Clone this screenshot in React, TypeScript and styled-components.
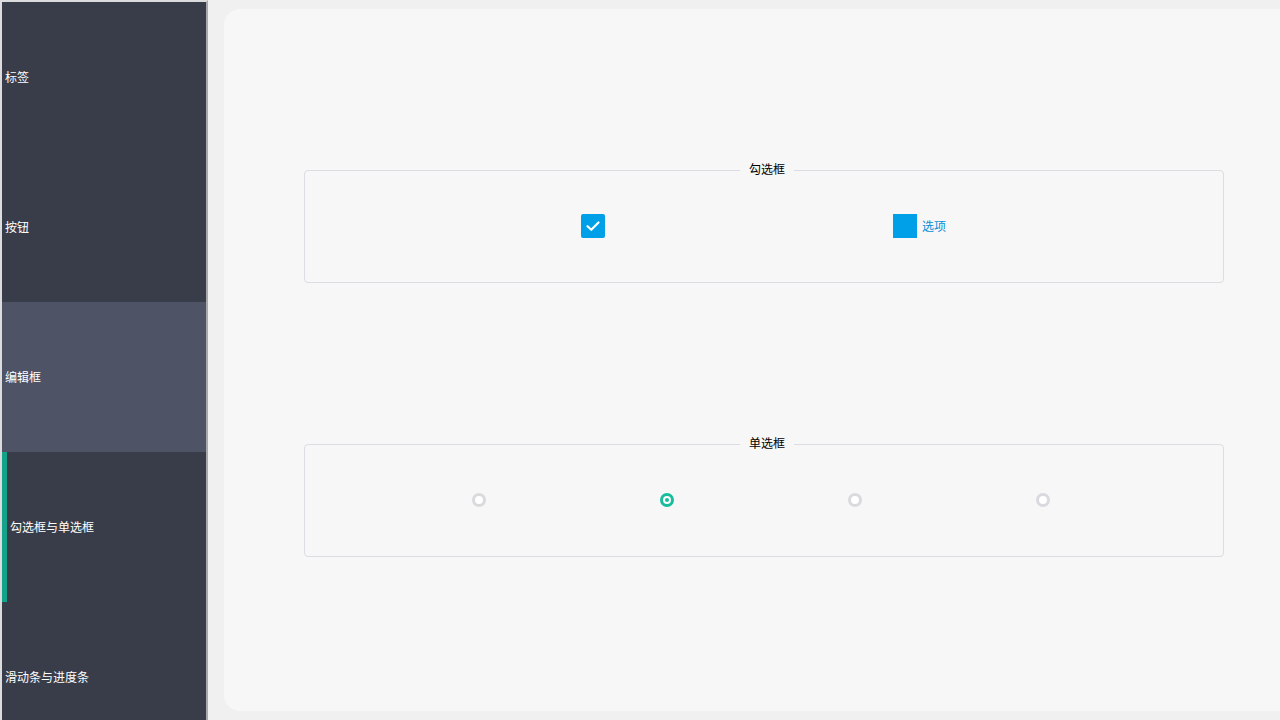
import { FC, useState } from 'react';
import styled, { createGlobalStyle } from 'styled-components';

const GlobalStyle = createGlobalStyle`
  html, body {
    margin: 0;
    padding: 0;
    height: 720px;
    overflow: hidden;
    background: #f0f0f0;
    font-family: "Noto Sans CJK SC", "Noto Sans", sans-serif;
  }
`;

const Page = styled.div`
  display: flex;
  height: 720px;
`;

const Sidebar = styled.nav`
  width: 204px;
  flex-shrink: 0;
  height: 718px;
  background: #393d4a;
  border-top: 2px solid #dcdcdf;
  border-left: 2px solid #dcdcdf;
  border-right: 2px solid #a9a9ad;
  overflow: hidden;
`;

const NavItem = styled.div<{ $active?: boolean; $hover?: boolean }>`
  display: flex;
  align-items: center;
  height: 150px;
  box-sizing: border-box;
  padding: 0 0 2px 3px;
  border-left: ${({ $active }) => ($active ? '5px solid #13a38a' : 'none')};
  background: ${({ $hover }) => ($hover ? '#4e5366' : 'transparent')};
  color: #ffffff;
  font-size: 12px;
  cursor: pointer;
`;

const Panel = styled.main`
  margin: 9px 0 9px 16px;
  width: 1080px;
  flex-shrink: 0;
  background: #f7f7f7;
  border-radius: 16px;
  padding: 152px 0 0 80px;
  box-sizing: border-box;
  display: flex;
  flex-direction: column;
  gap: 152px;
`;

const Group = styled.fieldset`
  width: 920px;
  box-sizing: border-box;
  margin: 0;
  padding: 0;
  border: 1px solid #dcdde3;
  border-radius: 4px;
`;

const Legend = styled.legend`
  margin-left: 435px;
  padding: 0 9px 2px;
  font-size: 12px;
  line-height: 16px;
  color: #000000;
`;

const GroupBody = styled.div`
  height: 103px;
  display: flex;
  align-items: center;
  padding-bottom: 10px;
  box-sizing: border-box;
`;

const CheckRow = styled.div`
  display: flex;
  align-items: center;
  padding-left: 276px;
  gap: 288px;
`;

const CheckItem = styled.label`
  display: flex;
  align-items: center;
  gap: 5px;
  color: #0a8ed6;
  font-size: 12px;
  cursor: pointer;
`;

const Box = styled.span<{ $square?: boolean }>`
  width: 24px;
  height: 24px;
  background: #00a0e9;
  border-radius: ${({ $square }) => ($square ? '0' : '2px')};
  display: flex;
  align-items: center;
  justify-content: center;
`;

const RadioRow = styled.div`
  display: flex;
  align-items: center;
  padding-left: 80px;
`;

const RadioCell = styled.div`
  width: 188px;
  display: flex;
  justify-content: center;
`;

const Radio = styled.span<{ $checked?: boolean }>`
  width: 14px;
  height: 14px;
  box-sizing: border-box;
  border-radius: 50%;
  border: 3px solid ${({ $checked }) => ($checked ? '#1abc9c' : '#d8dadd')};
  background: #ffffff;
  display: flex;
  align-items: center;
  justify-content: center;
  cursor: pointer;

  &::after {
    content: '';
    width: 4px;
    height: 4px;
    border-radius: 50%;
    background: ${({ $checked }) => ($checked ? '#1abc9c' : 'transparent')};
  }
`;

const items = ['标签', '按钮', '编辑框', '勾选框与单选框', '滑动条与进度条'];

const App: FC = () => {
  const [radio, setRadio] = useState<number>(1);

  return (
    <>
      <GlobalStyle />
      <Page>
        <Sidebar>
          {items.map((label, i) => (
            <NavItem key={label} $active={i === 3} $hover={i === 2}>
              {label}
            </NavItem>
          ))}
        </Sidebar>
        <Panel>
          <Group>
            <Legend>勾选框</Legend>
            <GroupBody>
              <CheckRow>
                <Box>
                  <svg width='16' height='16' viewBox='0 0 16 16'>
                    <path
                      d='M2.5 8.2 L6.3 11.8 L13.5 4.5'
                      fill='none'
                      stroke='#ffffff'
                      strokeWidth='2.2'
                      strokeLinecap='round'
                      strokeLinejoin='round'
                    />
                  </svg>
                </Box>
                <CheckItem>
                  <Box $square />
                  选项
                </CheckItem>
              </CheckRow>
            </GroupBody>
          </Group>
          <Group>
            <Legend>单选框</Legend>
            <GroupBody>
              <RadioRow>
                {[0, 1, 2, 3].map((i) => (
                  <RadioCell key={i}>
                    <Radio $checked={radio === i} onClick={() => setRadio(i)} />
                  </RadioCell>
                ))}
              </RadioRow>
            </GroupBody>
          </Group>
        </Panel>
      </Page>
    </>
  );
};

export default App;
